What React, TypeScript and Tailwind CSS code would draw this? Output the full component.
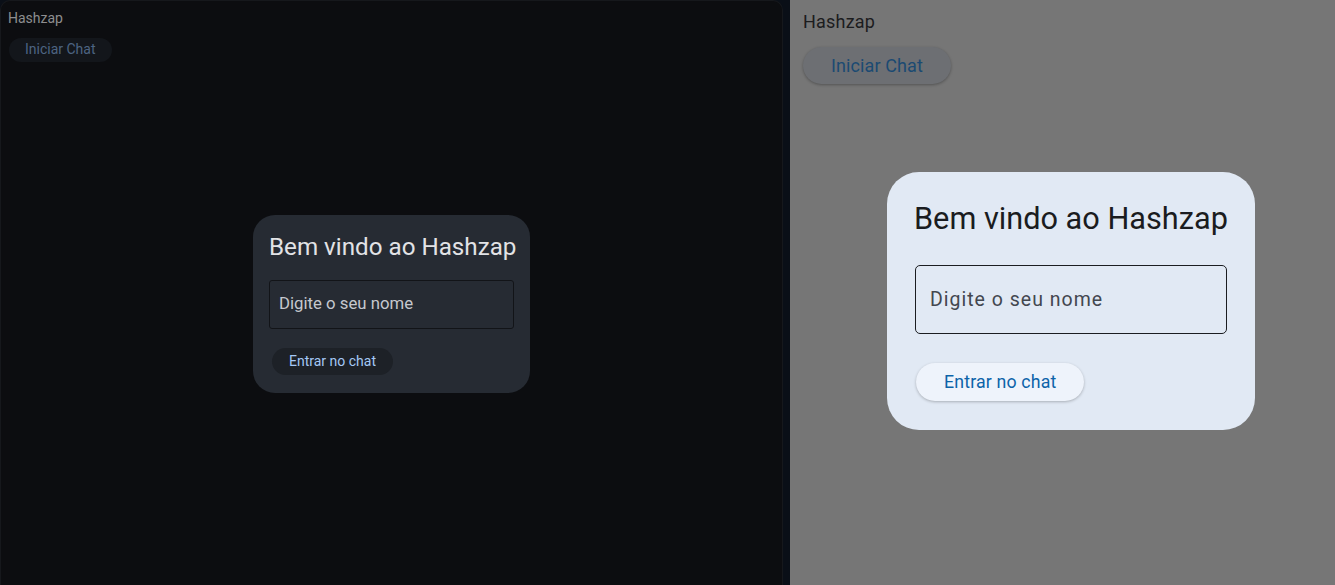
export default function App() {
  return (
    <div className="flex h-[585px] w-[1335px] overflow-hidden bg-[#0a0f17] font-['Roboto',sans-serif]">
      <DarkPane />
      <div className="w-[7px] shrink-0 bg-[#0a0f17]" />
      <LightPane />
    </div>
  )
}

function DarkPane() {
  return (
    <section className="flex w-[783px] shrink-0 flex-col rounded-t-[10px] border-x border-t border-[#16181c] bg-[#0c0d10]">
      <div className="pl-[7px] pt-[8px] text-[14px] leading-[18px] text-[#8d8d8f]">Hashzap</div>
      <div className="pl-[8px] pt-[10px]">
        <button className="h-[24px] rounded-full bg-[#13161b] px-[16px] text-[14px] text-[#4d6482]">Iniciar Chat</button>
      </div>
      <div className="mx-auto mt-[153px] w-[277px] rounded-[22px] bg-[#262b33] px-[16px] pb-[18px] pt-[18px]">
        <h1 className="whitespace-nowrap text-[24.2px] leading-[28px] text-[#e2e3e6]">Bem vindo ao Hashzap</h1>
        <div className="mt-[19px] flex h-[49px] items-center rounded-[3px] border border-[#121418] px-[9px] text-[16.75px] text-[#c5c8ce]">
          Digite o seu nome
        </div>
        <button className="ml-[3px] mt-[19px] h-[27px] rounded-full bg-[#1d2127] px-[17px] text-[14px] text-[#a4c8f5]">Entrar no chat</button>
      </div>
    </section>
  )
}

function LightPane() {
  return (
    <section className="flex flex-1 flex-col bg-[#767676]">
      <div className="pl-[13px] pt-[11px] text-[18px] leading-[22px] tracking-[0.2px] text-[#1c1c1e]">Hashzap</div>
      <div className="pl-[13px] pt-[14px]">
        <button className="h-[37px] rounded-full bg-[#6d6f73] px-[28px] text-[18px] tracking-[0.1px] text-[#1b4a72] shadow-[0_1px_3px_rgba(0,0,0,0.3)]">
          Iniciar Chat
        </button>
      </div>
      <div className="ml-[97px] mt-[88px] w-[368px] rounded-[32px] bg-[#e1e9f4] pb-[29px] pl-[27px] pr-[28px] pt-[28px]">
        <h1 className="whitespace-nowrap text-[30.7px] leading-[38px] text-[#1a1c20]">Bem vindo ao Hashzap</h1>
        <div className="ml-[1px] mt-[27px] flex h-[69px] items-center rounded-[5px] border-[1.5px] border-[#1b1d21] px-[14px] text-[19.5px] tracking-[1px] text-[#43474f]">
          Digite o seu nome
        </div>
        <button className="ml-[2px] mt-[29px] h-[38px] rounded-full bg-[#eef3fb] px-[28px] text-[17.75px] tracking-[0.15px] text-[#0c63a9] shadow-[0_1px_3px_rgba(0,0,0,0.25)]">
          Entrar no chat
        </button>
      </div>
    </section>
  )
}
